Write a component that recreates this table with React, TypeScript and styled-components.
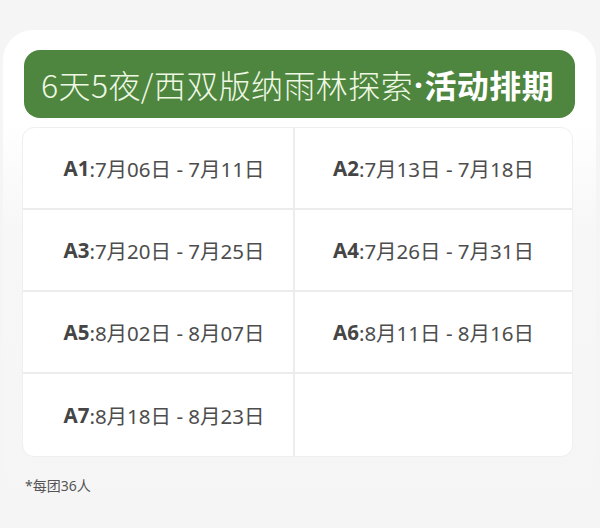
import { FC } from "react";
import styled, { createGlobalStyle } from "styled-components";

const GlobalStyle = createGlobalStyle`
  html, body {
    margin: 0;
    padding: 0;
    background: #f5f5f5;
  }
  body {
    font-family: "Noto Sans", "Noto Sans CJK SC", sans-serif;
  }
`;

const Page = styled.main`
  width: 600px;
  height: 528px;
  overflow: hidden;
  padding-top: 30px;
  box-sizing: border-box;
`;

const Card = styled.section`
  margin: 0 4px 0 3px;
  padding: 20px 22px 0 19px;
  border-radius: 30px 30px 0 0;
  background: linear-gradient(#ffffff 0, #ffffff 90px, #f7f7f7 200px, #f5f5f5 100%);
  height: 498px;
  box-sizing: border-box;
`;

const Banner = styled.header`
  margin-left: 2px;
  width: 551px;
  height: 68px;
  border-radius: 16px;
  background: #4e853f;
  display: flex;
  align-items: center;
  padding-left: 17px;
  box-sizing: border-box;
  font-family: "Noto Sans CJK SC", sans-serif;
  font-size: 32px;
  letter-spacing: 0.4px;
  color: #eef8e4;
  white-space: nowrap;
`;

const Light = styled.span`
  font-weight: 300;
`;

const Dot = styled.span`
  font-family: "Noto Sans", sans-serif;
  font-weight: 700;
  color: #ffffff;
  margin: 0 1px;
`;

const Strong = styled.span`
  font-weight: 700;
  color: #ffffff;
`;

const Table = styled.div`
  margin-top: 9px;
  width: 551px;
  display: grid;
  grid-template-columns: 270px 1fr;
  grid-auto-rows: 82px;
  background: #ffffff;
  border: 1px solid #efefef;
  border-radius: 12px;
  overflow: hidden;
  box-sizing: border-box;
`;

const Cell = styled.div<{ $right?: boolean; $last?: boolean }>`
  display: flex;
  align-items: center;
  justify-content: center;
  padding-left: ${(p) => (p.$right ? "0" : "12px")};
  border-left: ${(p) => (p.$right ? "2px solid #ececec" : "none")};
  border-bottom: ${(p) => (p.$last ? "none" : "2px solid #ececec")};
  font-size: 20.5px;
  color: #4d4d4d;
  white-space: nowrap;
`;

const Label = styled.b`
  font-weight: 700;
  color: #454545;
`;

const Note = styled.p`
  margin: 18px 0 0 3px;
  font-family: "Noto Sans", "Noto Sans CJK SC", sans-serif;
  font-size: 14px;
  color: #555555;
`;

interface Session {
  code: string;
  range: string;
}

const sessions: Session[] = [
  { code: "A1", range: "7月06日 - 7月11日" },
  { code: "A2", range: "7月13日 - 7月18日" },
  { code: "A3", range: "7月20日 - 7月25日" },
  { code: "A4", range: "7月26日 - 7月31日" },
  { code: "A5", range: "8月02日 - 8月07日" },
  { code: "A6", range: "8月11日 - 8月16日" },
  { code: "A7", range: "8月18日 - 8月23日" },
];

const App: FC = () => {
  const cells: (Session | null)[] = [...sessions, null];

  return (
    <>
      <GlobalStyle />
      <Page>
        <Card>
          <Banner>
            <Light>6天5夜/西双版纳雨林探索</Light>
            <Dot>·</Dot>
            <Strong>活动排期</Strong>
          </Banner>
          <Table>
            {cells.map((s, i) => (
              <Cell key={i} $right={i % 2 === 1} $last={i >= cells.length - 2}>
                {s && (
                  <>
                    <Label>{s.code}</Label>:{s.range}
                  </>
                )}
              </Cell>
            ))}
          </Table>
          <Note>*每团36人</Note>
        </Card>
      </Page>
    </>
  );
};

export default App;
